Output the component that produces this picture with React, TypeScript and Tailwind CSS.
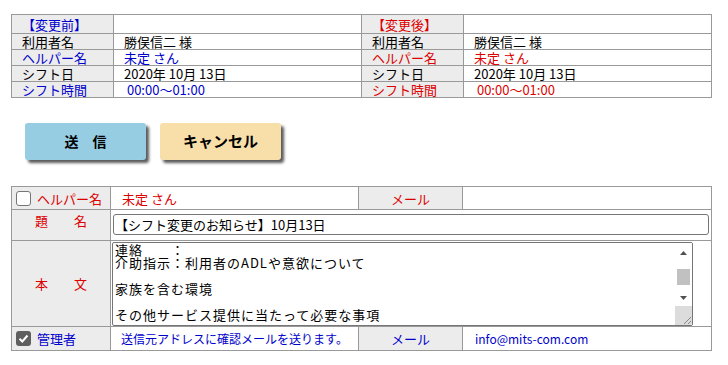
import React from 'react'

const blue = 'text-[#0000cc]'
const red = 'text-[#dd0000]'

const TopCell = ({ children, gray, tall, className = '' }: { children?: React.ReactNode; gray?: boolean; tall?: boolean; className?: string }) => (
  <div
    className={`flex items-center border-r border-b border-[#999] pl-[10px] leading-[15px] whitespace-nowrap ${tall ? 'h-[19px]' : 'h-[16px]'} ${gray ? 'bg-[#ececec]' : 'bg-white'} ${className}`}
  >
    {children}
  </div>
)

const shiftRows = [
  { label: '利用者名', value: '勝俣信二 様', colored: false },
  { label: 'ヘルパー名', value: '未定 さん', colored: true },
  { label: 'シフト日', value: '2020年 10月 13日', colored: false },
  { label: 'シフト時間', value: '\u00a000:00～01:00', colored: true },
]

const Checkbox = ({ checked }: { checked?: boolean }) =>
  checked ? (
    <span className="flex h-[15px] w-[15px] items-center justify-center rounded-[3px] bg-[#5f5f5f]">
      <svg width="11" height="11" viewBox="0 0 11 11">
        <path d="M1.5 5.8 L4.3 8.5 L9.5 2.5" fill="none" stroke="white" strokeWidth="2" />
      </svg>
    </span>
  ) : (
    <span className="h-[15px] w-[15px] rounded-[3px] border border-[#767676] bg-white" />
  )

export default function App() {
  return (
    <div className="min-h-screen bg-white pt-[14px] font-['Noto_Sans_CJK_JP',sans-serif] text-[13px] text-black">
      {/* before / after */}
      <div className="ml-[11px] grid w-[701px] grid-cols-[102px_248px_102px_248px] border-t border-l border-[#999]">
        <TopCell gray tall className={blue}>【変更前】</TopCell>
        <TopCell tall />
        <TopCell gray tall className={red}>【変更後】</TopCell>
        <TopCell tall />
        {shiftRows.map((r) => (
          <React.Fragment key={r.label}>
            <TopCell gray className={r.colored ? blue : ''}>{r.label}</TopCell>
            <TopCell className={r.colored ? blue : ''}>{r.value}</TopCell>
            <TopCell gray className={r.colored ? red : ''}>{r.label}</TopCell>
            <TopCell className={r.colored ? red : ''}>{r.value}</TopCell>
          </React.Fragment>
        ))}
      </div>

      {/* buttons */}
      <div className="mt-[25px] ml-[25px] flex gap-[14px]">
        <button className="h-[37px] w-[121px] rounded-[3px] bg-[#96cde3] text-[14px] font-bold shadow-[3px_3px_3px_rgba(0,0,0,0.65)]">
          送　信
        </button>
        <button className="h-[37px] w-[121px] rounded-[3px] bg-[#f8dfa9] text-[15px] font-bold shadow-[3px_3px_3px_rgba(0,0,0,0.65)]">
          キャンセル
        </button>
      </div>

      {/* mail form */}
      <div className="mt-[26px] ml-[11px] grid w-[701px] grid-cols-[99px_248px_104px_249px] border-t border-l border-[#999] leading-none">
        <div className="flex h-[23px] items-center gap-[6px] border-r border-b border-[#999] bg-[#ececec] pl-[4px]">
          <Checkbox />
          <span className={red}>ヘルパー名</span>
        </div>
        <div className={`flex h-[23px] items-center border-r border-b border-[#999] pl-[11px] ${red}`}>未定 さん</div>
        <div className={`flex h-[23px] items-center justify-center border-r border-b border-[#999] bg-[#ececec] ${red}`}>メール</div>
        <div className="h-[23px] border-r border-b border-[#999]" />

        <div className={`h-[31px] border-r border-b border-[#999] bg-[#ececec] pt-[4px] text-center ${red}`}>題　　名</div>
        <div className="col-span-3 h-[31px] border-r border-b border-[#999] pt-[4px] pl-[2px]">
          <div className="flex h-[21px] w-[596px] items-center rounded-[3px] border border-[#767676] pl-[1px]">
            【シフト変更のお知らせ】10月13日
          </div>
        </div>

        <div className={`flex h-[86px] items-center justify-center border-r border-b border-[#999] bg-[#ececec] ${red}`}>本　　文</div>
        <div className="col-span-3 h-[86px] border-r border-b border-[#999] pt-[1px] pl-[1px]">
          <div className="flex h-[84px] w-[581px] overflow-hidden rounded-[2px] border border-[#767676]">
            <div className="flex-1 pl-[2px] text-[13px] leading-[13px] tracking-[1px] whitespace-pre">
              {'連絡　　：\n介助指示：利用者のADLや意欲について\n\n家族を含む環境\n\nその他サービス提供に当たって必要な事項'}
            </div>
            <div className="flex w-[17px] flex-col items-center bg-white">
              <div className="flex h-[17px] items-center justify-center pt-[2px]">
                <svg width="7" height="4" viewBox="0 0 7 4"><path d="M0 4 L3.5 0 L7 4 Z" fill="#505050" /></svg>
              </div>
              <div className="mt-[9px] h-[16px] w-[13px] bg-[#c1c1c1]" />
              <div className="mt-[4px] flex h-[17px] items-center justify-center">
                <svg width="7" height="4" viewBox="0 0 7 4"><path d="M0 0 L3.5 4 L7 0 Z" fill="#505050" /></svg>
              </div>
              <div className="flex w-full flex-1 items-end justify-end bg-[#dcdcdc] pr-[1px] pb-[1px]">
                <svg width="9" height="9" viewBox="0 0 9 9">
                  <path d="M9 2 L2 9 M9 6 L6 9" stroke="#888" strokeWidth="1" />
                </svg>
              </div>
            </div>
          </div>
        </div>

        <div className="flex h-[24px] items-center gap-[6px] border-r border-b border-[#999] bg-[#ececec] pl-[4px]">
          <Checkbox checked />
          <span className={blue}>管理者</span>
        </div>
        <div className={`flex h-[24px] items-center justify-center border-r border-b border-[#999] text-[12px] ${blue}`}>
          送信元アドレスに確認メールを送ります。
        </div>
        <div className={`flex h-[24px] items-center justify-center border-r border-b border-[#999] bg-[#ececec] ${blue}`}>メール</div>
        <div className={`flex h-[24px] items-center border-r border-b border-[#999] pl-[12px] text-[12px] ${blue}`}>info@mits-com.com</div>
      </div>
    </div>
  )
}
